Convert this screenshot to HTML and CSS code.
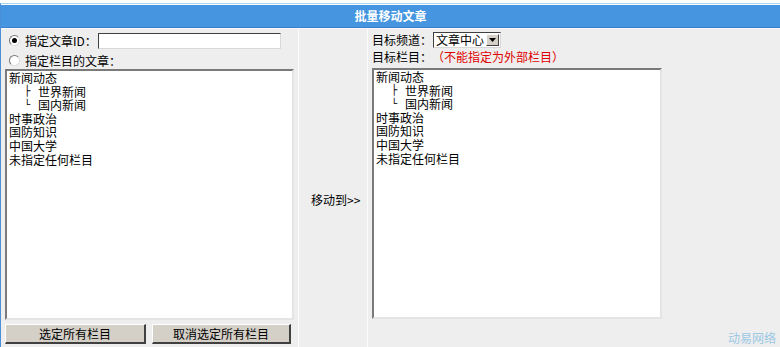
FILE: index.html
```html
<!DOCTYPE html>
<html lang="zh">
<head>
<meta charset="utf-8">
<title>批量移动文章</title>
<link rel="stylesheet" href="styles.css">
</head>
<body>
<div class="frame">
  <div class="title">批量移动文章</div>
  <div class="grid">
    <div class="cell left">
      <div class="row r1">
        <span class="radio checked"></span><span class="lbl">指定文章ID：</span><span class="input"></span>
      </div>
      <div class="row r2">
        <span class="radio"></span><span class="lbl">指定栏目的文章：</span>
      </div>
      <div class="listbox lb-left">
        <div class="item">新闻动态</div>
        <div class="item sub"><span class="pre">├</span>世界新闻</div>
        <div class="item sub"><span class="pre">└</span>国内新闻</div>
        <div class="item">时事政治</div>
        <div class="item">国防知识</div>
        <div class="item">中国大学</div>
        <div class="item">未指定任何栏目</div>
      </div>
      <div class="btns">
        <span class="btn b1">选定所有栏目</span>
        <span class="btn b2">取消选定所有栏目</span>
      </div>
    </div>
    <div class="cell mid">移动到&gt;&gt;</div>
    <div class="cell right">
      <div class="row r3">
        <span class="lbl">目标频道：</span>
        <span class="select"><span class="sel-text">文章中心</span><span class="arrow"><svg width="7" height="4" viewBox="0 0 7 4"><path d="M0 0h7L3.5 4z" fill="#000"/></svg></span></span>
      </div>
      <div class="row r4"><span class="lbl">目标栏目：</span><span class="warn">（不能指定为外部栏目）</span></div>
      <div class="listbox lb-right">
        <div class="item">新闻动态</div>
        <div class="item sub"><span class="pre">├</span>世界新闻</div>
        <div class="item sub"><span class="pre">└</span>国内新闻</div>
        <div class="item">时事政治</div>
        <div class="item">国防知识</div>
        <div class="item">中国大学</div>
        <div class="item">未指定任何栏目</div>
      </div>
    </div>
  </div>
  <div class="mark">动易网络</div>
</div>
</body>
</html>
```
FILE: styles.css
```css
html, body {
  margin: 0;
  padding: 0;
  background: #ffffff;
  font-family: "Noto Sans CJK SC", "Noto Sans", sans-serif;
  font-size: 12px;
  color: #000;
}
.frame {
  position: relative;
  margin-top: 3px;
  border-top: 1px solid #a9d3f2;
  border-left: 1px solid #4a90d8;
  background: #eeeeee;
  height: 343px;
  overflow: hidden;
}
.title {
  box-sizing: border-box;
  height: 24px;
  line-height: 22px;
  background: #4595e0;
  border-top: 1px solid #ffffff;
  border-bottom: 1px solid #3a7fc8;
  color: #fff;
  font-weight: bold;
  text-align: center;
}
.grid {
  border-top: 1px solid #fafafa;
  display: grid;
  grid-template-columns: 298px 69px 1fr;
  height: 330px;
}
.cell {
  border-right: 1px solid #fbfbfb;
  box-sizing: border-box;
}
.left {
  padding: 3px 0 0 4px;
}
.row {
  display: flex;
  align-items: center;
  white-space: nowrap;
}
.r1 { height: 17px; }
.r2 { height: 17px; margin-top: 3px; }
.radio {
  width: 9px;
  height: 9px;
  border-radius: 50%;
  border: 1px solid #777;
  border-right-color: #ddd;
  border-bottom-color: #ddd;
  background: #fff;
  margin: 0 5px 0 4px;
  position: relative;
}
.radio.checked::after {
  content: "";
  position: absolute;
  left: 2px;
  top: 2px;
  width: 5px;
  height: 5px;
  border-radius: 50%;
  background: #000;
}
.input {
  width: 181px;
  height: 14px;
  background: #fff;
  border: 1px solid #404040;
  border-right-color: #d8d8d8;
  border-bottom-color: #d8d8d8;
  margin-left: 1px;
}
.listbox {
  background: #fff;
  border: 2px solid #7a7a7a;
  border-right-color: #e4e4e4;
  border-bottom-color: #e4e4e4;
  box-sizing: border-box;
  padding: 0 0 0 2px;
}
.item {
  display: flex;
  align-items: center;
  height: 13.6px;
  line-height: 13.6px;
}
.lb-left {
  width: 289px;
  height: 251px;
}
.sub {
  padding-left: 15px;
}
.pre {
  display: inline-block;
  width: 14px;
  font-family: "DejaVu Sans Mono", monospace;
  font-size: 10px;
  line-height: 10px;
}
.btns {
  display: flex;
  gap: 6px;
  margin-top: 4px;
}
.btn {
  display: block;
  height: 20px;
  line-height: 18px;
  box-sizing: border-box;
  background: #d4d0c8;
  border: 1px solid #fff;
  border-right: 2px solid #404040;
  border-bottom: 2px solid #404040;
  text-align: center;
}
.b1 { width: 141px; }
.b2 { width: 139px; }
.mid {
  padding: 162px 0 0 12px;
}
.right {
  padding: 2px 0 0 4px;
  border-right: none;
}
.r3 { height: 17px; }
.r4 { height: 15px; margin-top: 1px; }
.select {
  display: flex;
  align-items: center;
  width: 68px;
  height: 16px;
  box-sizing: border-box;
  background: #fff;
  border: 1px solid #404040;
  border-right-color: #d8d8d8;
  border-bottom-color: #d8d8d8;
  margin-left: 1px;
}
.sel-text { flex: 1; padding-left: 2px; line-height: 14px; }
.arrow {
  width: 13px;
  height: 12px;
  margin-right: 1px;
  background: #d4d0c8;
  border-top: 1px solid #fff;
  border-left: 1px solid #fff;
  border-right: 1px solid #404040;
  border-bottom: 1px solid #404040;
  box-sizing: border-box;
  display: flex;
  align-items: center;
  justify-content: center;
}
.warn { color: #e00000; }
.lb-right {
  width: 290px;
  height: 251px;
  margin-top: 4px;
}
.mark {
  position: absolute;
  right: 4px;
  bottom: 1px;
  color: #9cc8e4;
  font-size: 12px;
}
```
